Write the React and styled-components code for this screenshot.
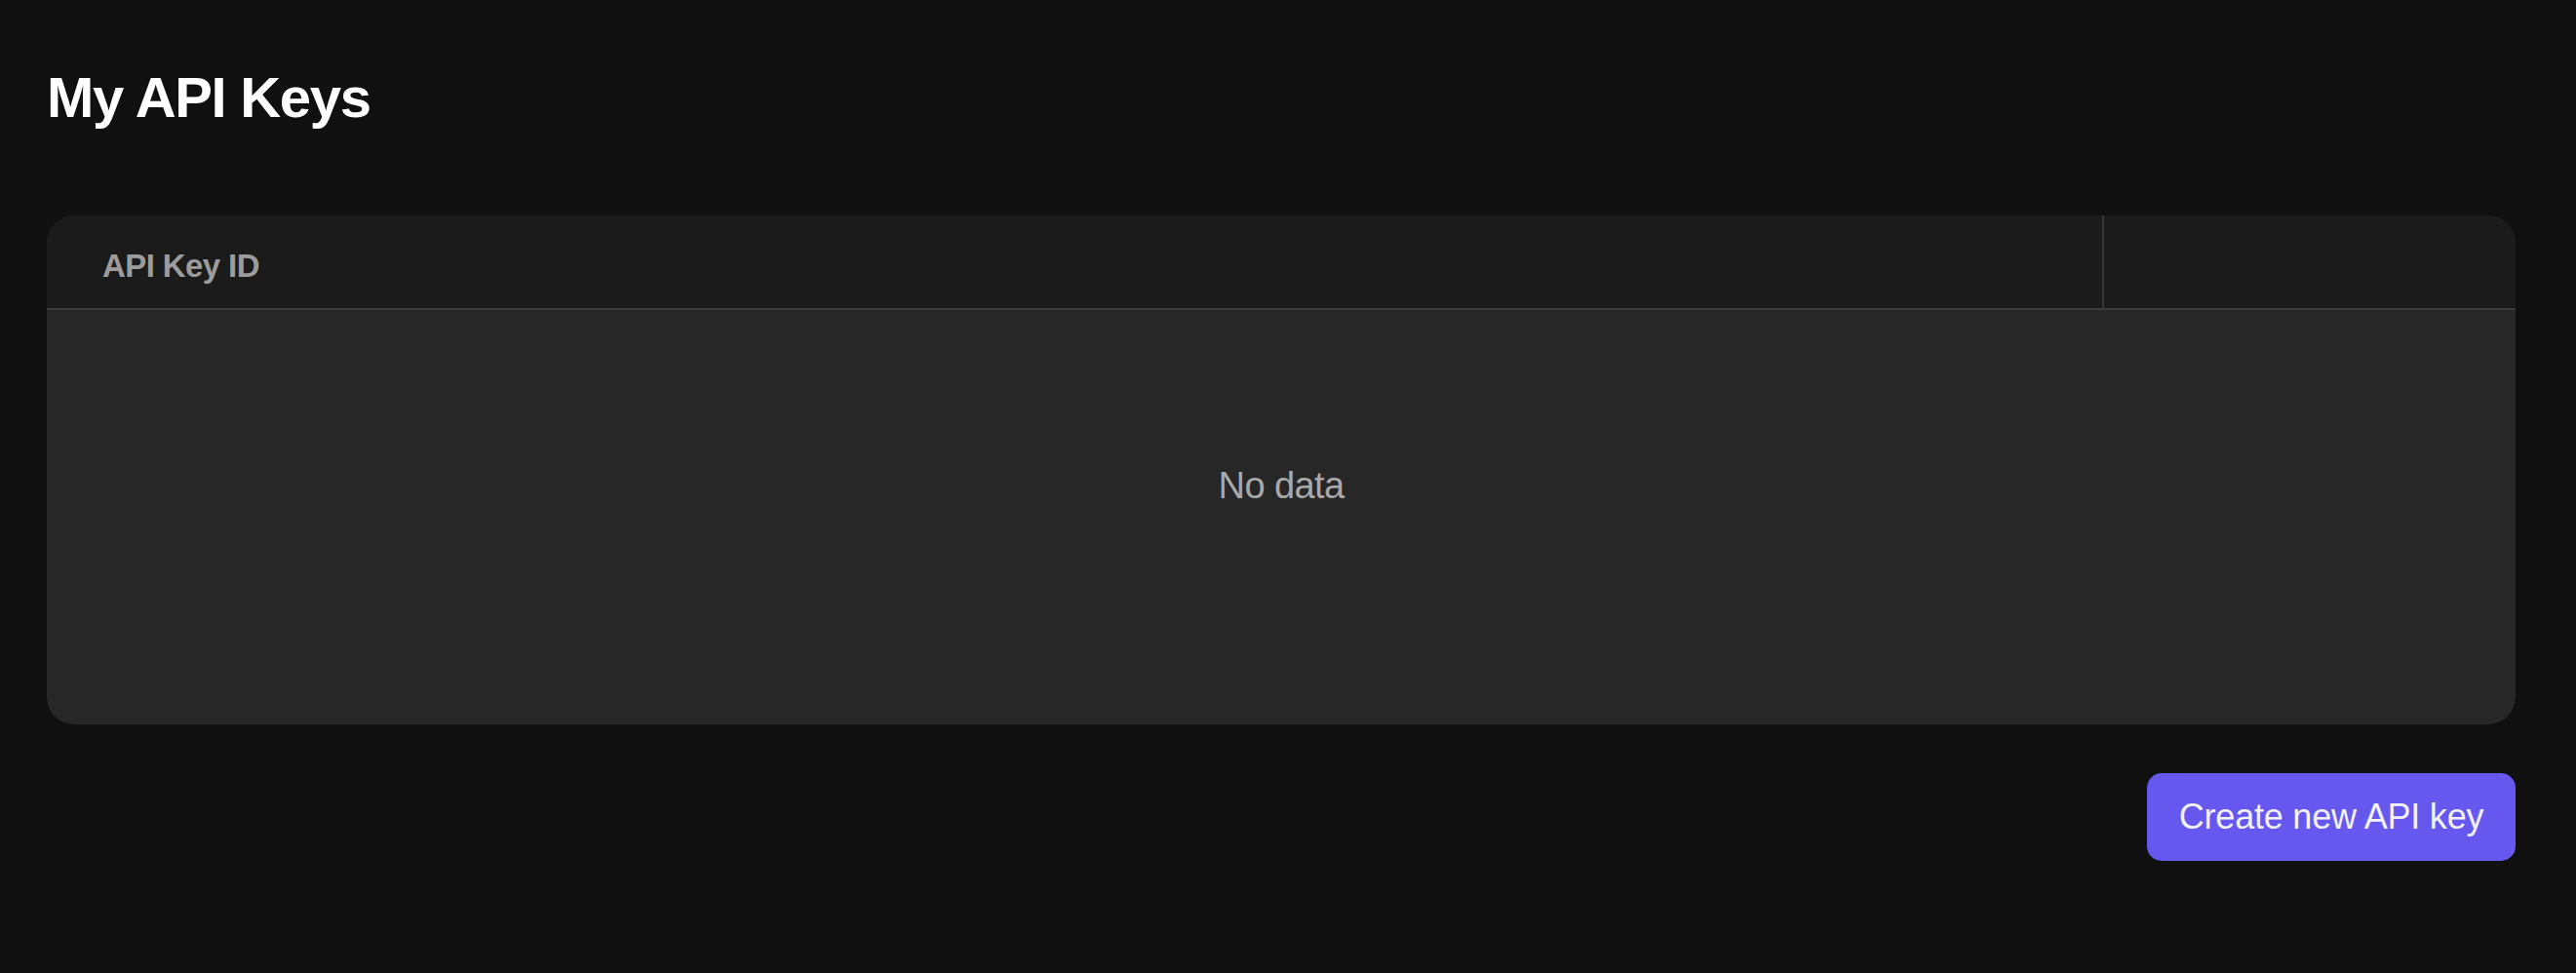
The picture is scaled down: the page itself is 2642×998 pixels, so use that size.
import React from "react";
import styled, { createGlobalStyle } from "styled-components";

const GlobalStyle = createGlobalStyle`
  html, body {
    margin: 0;
    padding: 0;
    background: #101010;
  }
  body {
    font-family: "Liberation Sans", Arial, sans-serif;
    color: #fff;
  }
`;

const Page = styled.div`
  min-height: 998px;
  box-sizing: border-box;
  padding: 71px 62px 48px 48px;
  background: #101010;
`;

const Title = styled.h1`
  margin: 0 0 92px;
  font-size: 58px;
  line-height: 1;
  font-weight: 700;
  letter-spacing: -1.3px;
  color: #ffffff;
`;

const Table = styled.div`
  border-radius: 28px;
  overflow: hidden;
  background: #272727;
`;

const HeaderRow = styled.div`
  display: grid;
  grid-template-columns: 1fr 424px;
  height: 95px;
  background: #1b1b1b;
  border-bottom: 2px solid #3b3b3b;
`;

const HeaderCell = styled.div`
  box-sizing: border-box;
  padding: ${(p) => (p.$divided ? "0" : "35px 0 0 57px")};
  border-left: ${(p) => (p.$divided ? "2px solid #343434" : "none")};
  font-size: 33px;
  line-height: 1;
  font-weight: 700;
  letter-spacing: -0.6px;
  color: #9c9c9c;
`;

const Body = styled.div`
  height: 425px;
  box-sizing: border-box;
  padding-top: 161px;
  display: flex;
  justify-content: center;
  align-items: flex-start;
`;

const Empty = styled.div`
  font-size: 38px;
  line-height: 1;
  letter-spacing: -0.6px;
  color: #a9a9a9;
`;

const Actions = styled.div`
  display: flex;
  justify-content: flex-end;
  margin-top: 50px;
`;

const Button = styled.button`
  width: 378px;
  height: 90px;
  border: none;
  border-radius: 15px;
  background: #6658ef;
  color: #f2f1f7;
  font-family: "Liberation Sans", Arial, sans-serif;
  font-size: 36px;
  line-height: 1;
  letter-spacing: -0.2px;
  cursor: pointer;
`;

export default function App() {
  return (
    <>
      <GlobalStyle />
      <Page>
        <Title>My API Keys</Title>
        <Table>
          <HeaderRow>
            <HeaderCell>API Key ID</HeaderCell>
            <HeaderCell $divided />
          </HeaderRow>
          <Body>
            <Empty>No data</Empty>
          </Body>
        </Table>
        <Actions>
          <Button>Create new API key</Button>
        </Actions>
      </Page>
    </>
  );
}
